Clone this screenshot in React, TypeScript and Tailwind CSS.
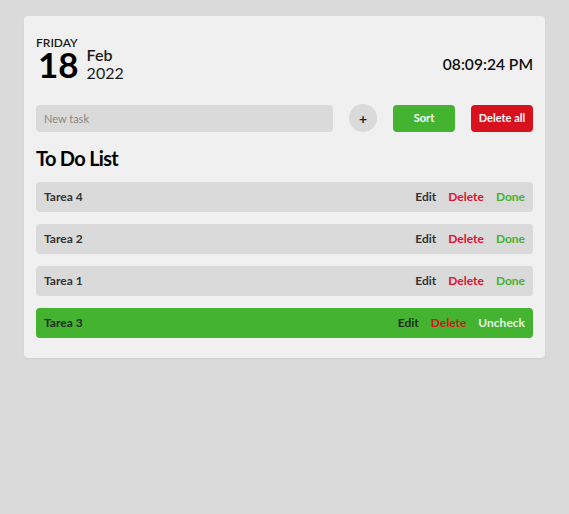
import React, { useState } from 'react';

type Task = { id: number; name: string; done: boolean };

const App = () => {
  const [tasks] = useState<Task[]>([
    { id: 4, name: 'Tarea 4', done: false },
    { id: 2, name: 'Tarea 2', done: false },
    { id: 1, name: 'Tarea 1', done: false },
    { id: 3, name: 'Tarea 3', done: true },
  ]);

  return (
    <div className="min-h-screen bg-[#dadada] pt-[16px] font-['Lato','Liberation_Sans',sans-serif]">
      <div className="mx-6 rounded bg-[#f0f0f0] px-3 pt-[21px] pb-5 shadow-[0_1px_2px_rgba(0,0,0,0.06)]">
        {/* Header: date + clock */}
        <div className="flex items-start justify-between">
          <div className="flex items-start">
            <div className="flex flex-col">
              <span className="text-[12px] font-semibold uppercase leading-none text-[#1a1a1a]">Friday</span>
              <span className="-mt-[2px] pl-[2px] text-[35px] font-bold leading-none text-black">18</span>
            </div>
            <div className="ml-[8px] mt-[9px] flex flex-col text-[16px] leading-[18px] text-[#1a1a1a]">
              <span className="font-semibold">Feb</span>
              <span>2022</span>
            </div>
          </div>
          <span className="mt-[20px] text-[15.6px] font-semibold leading-none text-[#111]">08:09:24 PM</span>
        </div>

        {/* Input row */}
        <div className="mt-[22px] flex items-center gap-4">
          <input
            type="text"
            placeholder="New task"
            className="h-[27px] flex-1 rounded bg-[#dadada] px-2 text-[11px] text-[#333] outline-none placeholder:text-[#888]"
          />
          <button className="flex h-[28px] w-[28px] items-center justify-center rounded-full bg-[#dadada] text-[14px] font-bold text-[#222]">
            +
          </button>
          <button className="h-[27px] w-[62px] rounded bg-[#44b32f] text-[11px] font-bold text-white">Sort</button>
          <button className="h-[27px] w-[62px] rounded bg-[#d8111f] text-[11px] font-bold text-white">Delete all</button>
        </div>

        <h2 className="mt-[16px] text-[20px] font-bold leading-none tracking-[-0.7px] text-black">To Do List</h2>

        {/* Tasks */}
        <div className="mt-[14px] flex flex-col gap-3">
          {tasks.map((task) => (
            <div
              key={task.id}
              className={`flex h-[30px] items-center justify-between rounded px-2 text-[12px] font-bold ${
                task.done ? 'bg-[#44b32f]' : 'bg-[#dadada]'
              }`}
            >
              <span className={task.done ? 'text-[#1c2a1a]' : 'text-[#333]'}>{task.name}</span>
              <div className="flex items-center gap-3">
                <button className={task.done ? 'text-[#1c2a1a]' : 'text-[#333]'}>Edit</button>
                <button className={task.done ? 'text-[#d8111f]' : 'text-[#e01030]'}>Delete</button>
                <button className={task.done ? 'text-[#e6f2e3]' : 'text-[#44b32f]'}>{task.done ? 'Uncheck' : 'Done'}</button>
              </div>
            </div>
          ))}
        </div>
      </div>
    </div>
  );
};

export default App;
